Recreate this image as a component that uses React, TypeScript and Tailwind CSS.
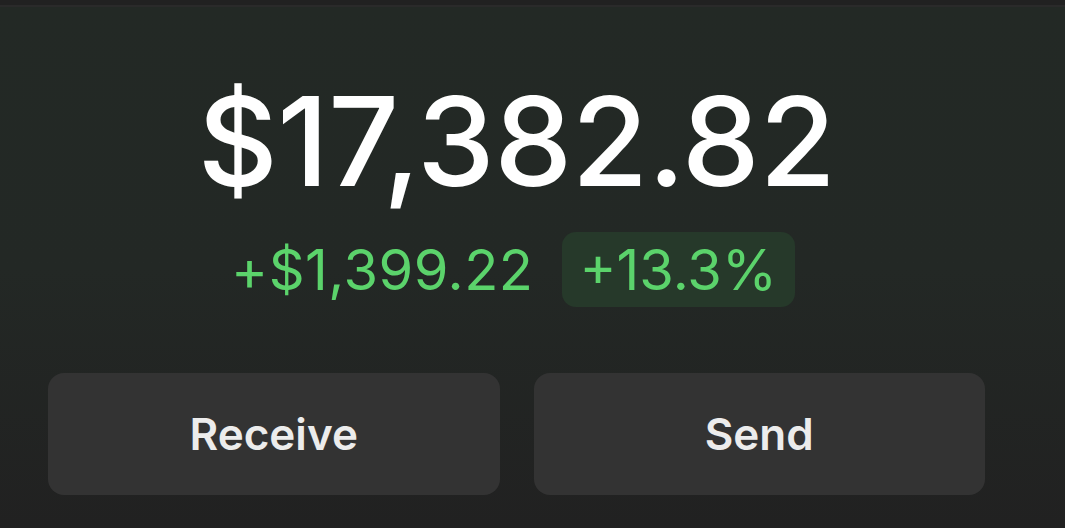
import React from "react";

export default function App() {
  return (
    <div
      className="w-[1065px] h-[528px] flex flex-col overflow-hidden bg-[#212121]"
      style={{ fontFamily: "Inter, 'Noto Sans', sans-serif" }}
    >
      <div className="h-[5px] bg-[#212121]" />
      <div className="h-[2px] bg-[#2a2a2a]" />
      <div className="flex-1 flex flex-col bg-gradient-to-b from-[#232925] via-[#232825] to-[#212121] pl-[48px] pr-[80px]">
        <div className="flex flex-col items-center pt-[72px]">
          <div className="text-[124px] leading-none font-medium text-white tracking-[-0.5px]">
            $17,382.82
          </div>
          <div className="flex items-center gap-[28px] mt-[29px] mr-[7px]">
            <span className="text-[56px] leading-none text-[#5bd36b] tracking-[0.5px]">+$1,399.22</span>
            <span className="h-[75px] px-[18px] flex items-center rounded-[14px] bg-[#26392a] text-[56px] leading-none text-[#5bd36b]">
              +13.3%
            </span>
          </div>
        </div>
        <div className="grid grid-cols-2 gap-[34px] mt-[66px]">
          <button className="h-[122px] rounded-[16px] bg-[#333333] text-[#ececec] text-[44px] font-semibold">
            Receive
          </button>
          <button className="h-[122px] rounded-[16px] bg-[#333333] text-[#ececec] text-[44px] font-semibold">
            Send
          </button>
        </div>
      </div>
    </div>
  );
}
